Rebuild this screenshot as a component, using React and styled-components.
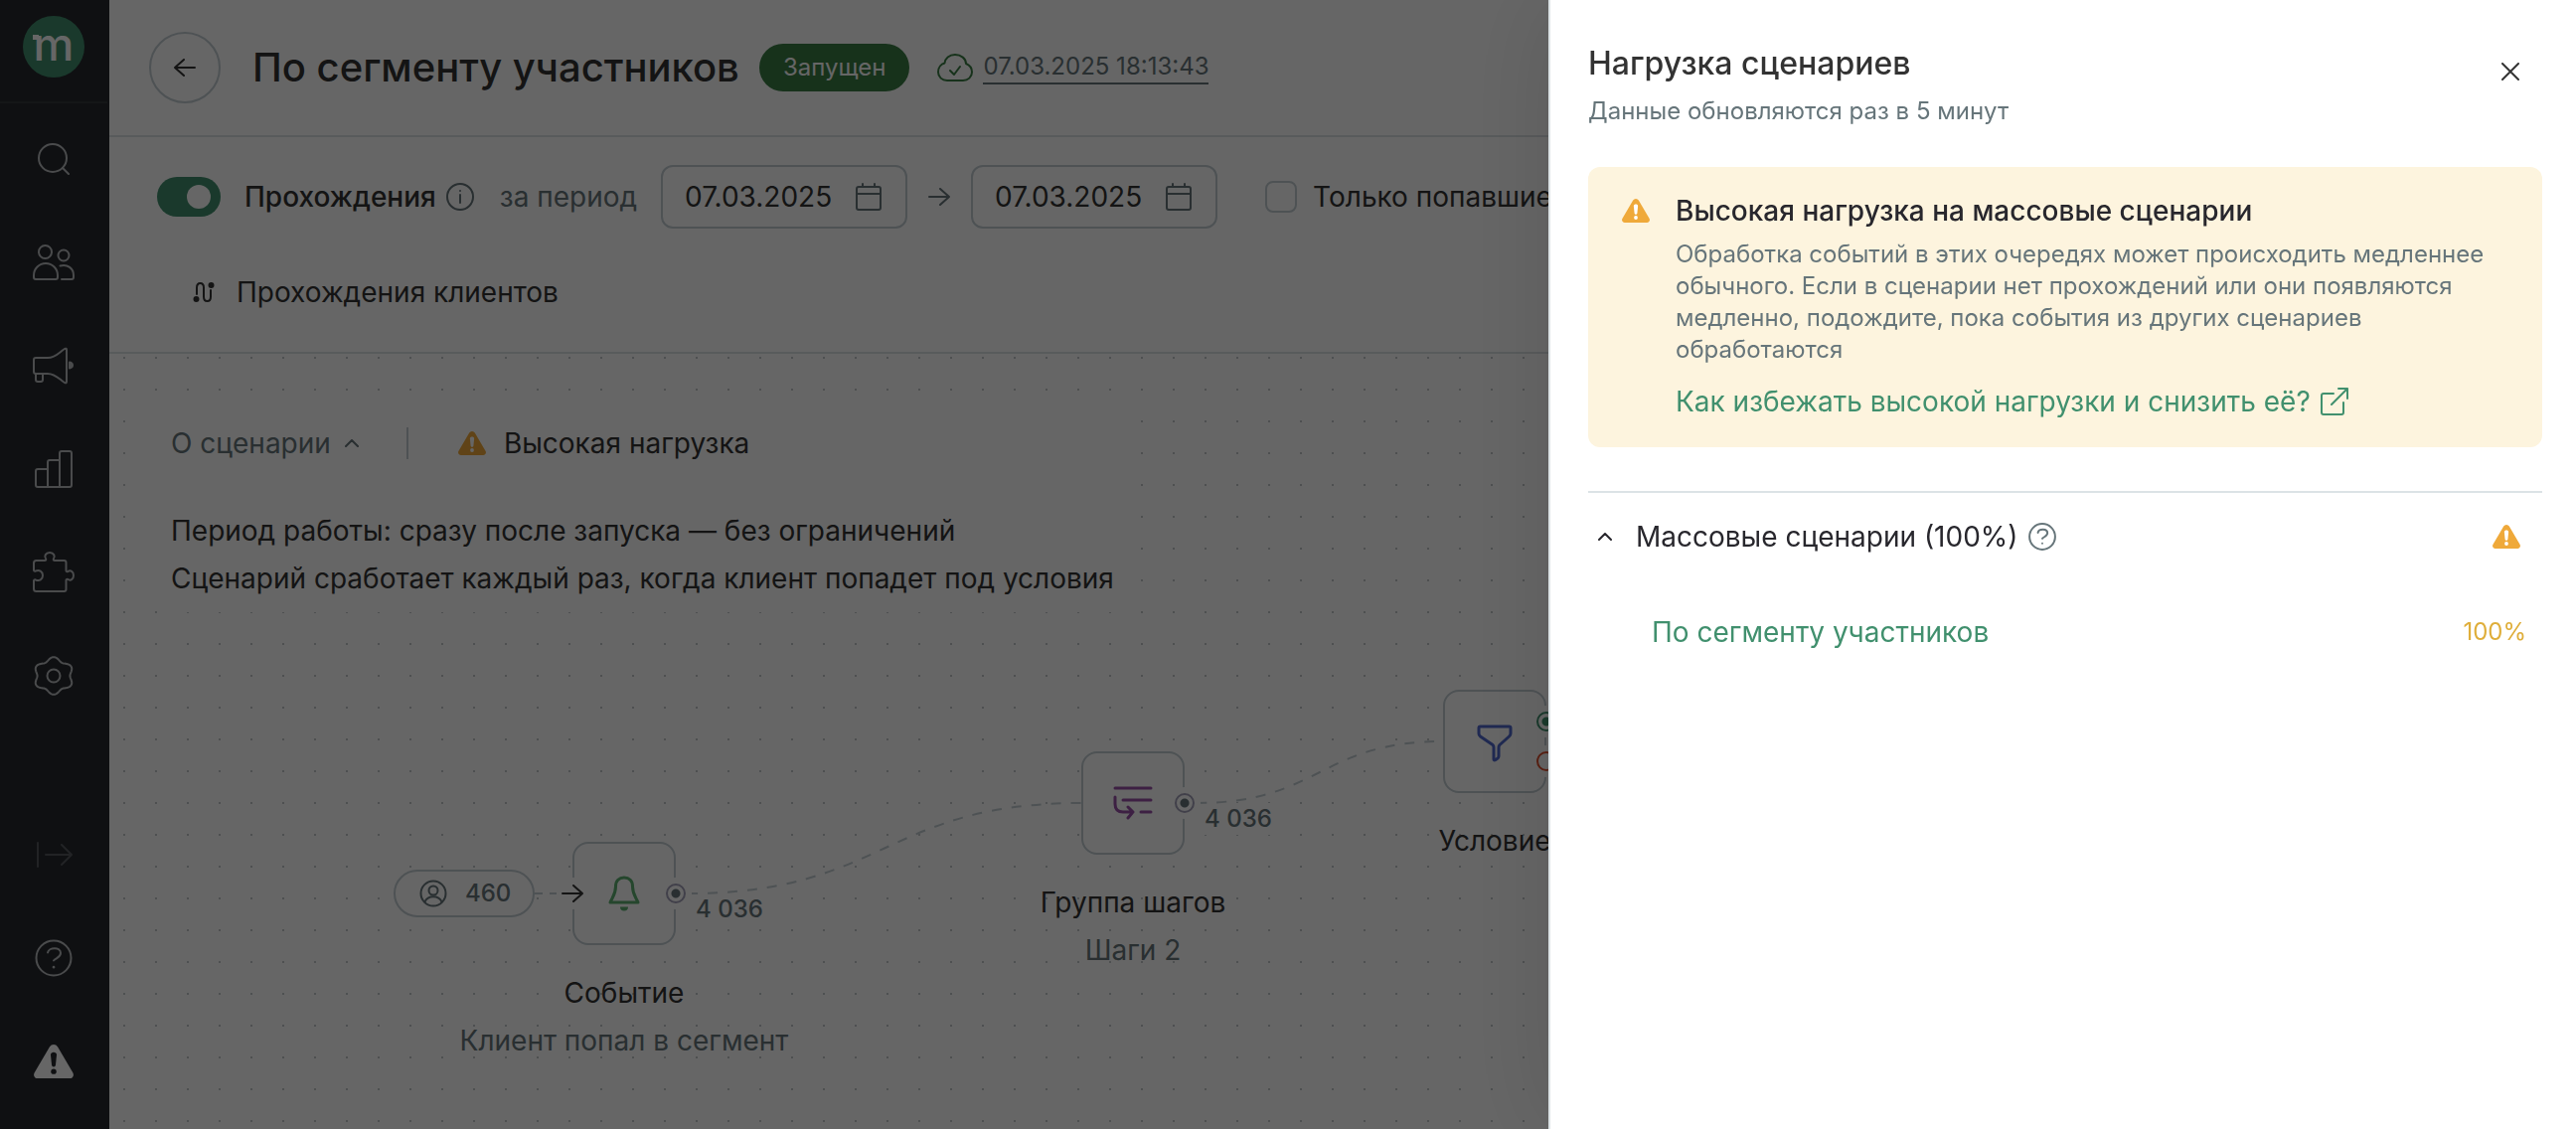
import React from "react";
import styled, { createGlobalStyle } from "styled-components";

const ink = "#333333";
const muted = "#66757a";
const line = "#dce3e6";
const outline = "#c2cdd3";
const accent = "#41906e";
const warn = "#efa93a";

const GlobalStyle = createGlobalStyle`
  *, *::before, *::after { box-sizing: border-box; }
  html, body { margin: 0; overflow: hidden; }
  body {
    background: #ffffff;
    color: ${ink};
    font-family: Inter, "Liberation Sans", sans-serif;
    font-size: 28px;
    line-height: 40px;
  }
  button, input { font: inherit; color: inherit; margin: 0; }
  button { background: none; border: 0; padding: 0; cursor: pointer; }
  h1, h2, h3, p, ul { margin: 0; padding: 0; }
  ul { list-style: none; }
  svg { display: block; flex: none; }
`;

/* ---------- icons ---------- */

const Icon = ({ w, h = w, children, stroke = 2 }) => (
  <svg
    width={w}
    height={h}
    viewBox={`0 0 ${w} ${h}`}
    fill="none"
    stroke="currentColor"
    strokeWidth={stroke}
    strokeLinecap="round"
    strokeLinejoin="round"
    aria-hidden="true"
  >
    {children}
  </svg>
);

const SearchIcon = () => (
  <Icon w={32}>
    <circle cx="15" cy="15" r="14" />
    <path d="M25 25l6 6" />
  </Icon>
);

const PeopleIcon = () => (
  <Icon w={42} h={36}>
    <circle cx="12.5" cy="7.5" r="6.5" />
    <path d="M1 31a12 12 0 0 1 24 0v2q0 2-2 2H3q-2 0-2-2z" />
    <circle cx="31" cy="11" r="5.5" />
    <path d="M27.500 21.500C35 19.500 41 24 41 31v2q0 2-2 2H29" />
  </Icon>
);

const MegaphoneIcon = () => (
  <Icon w={42} h={38}>
    <path d="M1 13q0-2 2-2h12c8 0 12-6 17-9q2-1 2 1v32q0 2-2 1c-5-3-9-9-17-9H3q-2 0-2-2z" />
    <path d="M3 27v6q0 2 2 2h3q2 0 2-2v-6" />
    <path d="M37 15.500c4 1 4 5 0 6z" fill="currentColor" />
  </Icon>
);

const BarsIcon = () => (
  <Icon w={38}>
    <path d="M1 21q0-2 2-2h10v18H3q-2 0-2-2z" />
    <path d="M13 37V12q0-2 2-2h10v27z" />
    <path d="M25 37V3q0-2 2-2h8q2 0 2 2v32q0 2-2 2z" />
  </Icon>
);

const PuzzleIcon = () => (
  <Icon w={42}>
    <path d="M3.500 9H12q1.500 0 1.200-1.500C11 4.500 13 1 17 1s6 3.500 3.800 6.500Q20.500 9 22 9h9.500q2 0 2 2v8q0 1.500 1.500 1.200c3-2.200 6 0 6 3.800s-3 6-6 3.800q-1.500-.3-1.500 1.200v9q0 2-2 2h-28q-2.500 0-2.500-2.500V29.500q0-1.500 1.500-1.200c4 2 7.500-.3 7.500-4.300s-3.500-6.300-7.500-4.300Q1 20 1 18.500v-7Q1 9 3.500 9z" />
  </Icon>
);

const gearOutline = Array.from({ length: 120 }, (_, i) => {
  const a = (i / 120) * Math.PI * 2;
  const r = 17 + 1.8 * Math.cos(6 * (a + Math.PI / 2));
  return `${(20 + 1.08 * r * Math.cos(a)).toFixed(2)},${(20 + r * Math.sin(a)).toFixed(2)}`;
}).join(" ");

const GearIcon = () => (
  <Icon w={40}>
    <polygon points={gearOutline} />
    <circle cx="20" cy="20" r="6.500" />
  </Icon>
);

const CollapseIcon = () => (
  <Icon w={38} h={28}>
    <path d="M3 2v24M11 14h26M27 4l10 10-10 10" />
  </Icon>
);

const HelpIcon = ({ w = 38 }) => (
  <svg width={w} height={w} viewBox="0 0 38 38" fill="none" stroke="currentColor" strokeWidth={76 / w} strokeLinecap="round" aria-hidden="true">
    <circle cx="19" cy="19" r="17.500" />
    <path d="M13 13.500c1-5.500 13-6 13 .5 0 4.500-5 5-7 7.500" />
    <path d="M19 28v.2" strokeWidth="2.600" />
  </svg>
);

const WarningIcon = ({ w = 28, mark = "#fff" }) => (
  <svg width={w} height={(w * 24) / 28} viewBox="0 0 28 24" aria-hidden="true">
    <path
      fill="currentColor"
      d="M11.200 1.600a3.300 3.300 0 0 1 5.600 0l10.700 18.200c1.200 2-.1 4.200-2.300 4.200H2.800C.6 24-.7 21.800.5 19.800z"
    />
    <path fill={mark} d="M11.900 7.400c-.2-2.600 4.400-2.600 4.200 0l-.7 7c-.2 1.800-2.600 1.800-2.800 0z" />
    <circle fill={mark} cx="14" cy="19" r="1.900" />
  </svg>
);

const BackIcon = () => (
  <Icon w={22} h={18}>
    <path d="M21 9H1M10 1L1 9l9 8" />
  </Icon>
);

const ForwardIcon = () => (
  <Icon w={22} h={18}>
    <path d="M1 9h20M12 1l9 8-9 8" />
  </Icon>
);

const CloudIcon = () => (
  <Icon w={36} h={28}>
    <path d="M10 27h16c5 0 9-3.500 9-8.500 0-4-2.500-7-6-8.500C29 5 24 1 18 1S8 5 7.500 9.500C4 10.500 1 14 1 18.500 1 23.500 5 27 10 27z" />
    <path d="M13 17l4 4 6-8" />
  </Icon>
);

const InfoIcon = () => (
  <Icon w={28}>
    <circle cx="14" cy="14" r="13" />
    <path d="M14 12v8M14 8v.1" />
  </Icon>
);

const CalendarIcon = () => (
  <Icon w={26} h={28}>
    <rect x="1" y="4" width="24" height="23" rx="2" />
    <path d="M1 11h24M7 1v3M19 1v3" />
  </Icon>
);

const RouteIcon = () => (
  <Icon w={22}>
    <path d="M4 13V6.500C4 .5 11 .5 11 6.500v9c0 6 7 6 7 0V9" />
    <circle cx="3.500" cy="18" r="2" fill="currentColor" />
    <circle cx="18.500" cy="4" r="2" fill="currentColor" />
  </Icon>
);

const ChevronUp = () => (
  <Icon w={14} h={8}>
    <path d="M1 7l6-6 6 6" />
  </Icon>
);

const CloseIcon = () => (
  <Icon w={18}>
    <path d="M1 1l16 16M17 1L1 17" />
  </Icon>
);

const ExternalIcon = () => (
  <Icon w={28}>
    <path d="M13 6H3q-2 0-2 2v17q0 2 2 2h18q2 0 2-2V15" />
    <path d="M18 1h9v10M27 1L11 17" />
  </Icon>
);

const PersonIcon = () => (
  <Icon w={28}>
    <circle cx="14" cy="14" r="12.500" />
    <circle cx="14" cy="11" r="4.500" />
    <path d="M5.500 22.500c3-7 14-7 17 0" />
  </Icon>
);

const BellIcon = () => (
  <Icon w={34} h={36} stroke={3}>
    <path d="M17 2c-5 0-8.500 3-8.500 9 0 8-3.500 11-5.500 16h28c-2-5-5.500-8-5.500-16 0-6-3.500-9-8.500-9z" />
    <path d="M13 31.500h8a4 4 0 0 1-8 0z" fill="currentColor" stroke="none" />
  </Icon>
);

const GroupIcon = () => (
  <Icon w={40} h={34} stroke={3}>
    <path d="M2 2h36M10 14h28M28 26h10M2 11v7c0 6 3 8 8 8h10M15 21l5 5-5 6" />
  </Icon>
);

const FunnelIcon = () => (
  <Icon w={36} h={42} stroke={3}>
    <path d="M3.500 6h29q1.500 0 1.500 1.500V13q0 2-1.500 3L23 24.500q-1 1-1 2.500v9q0 1-1 2l-2.500 1.700q-1.500.8-1.500-1V27q0-1.500-1-2.500L3.500 16Q2 15 2 13V7.500Q2 6 3.500 6z" />
  </Icon>
);

/* ---------- shell ---------- */

const Shell = styled.div`
  display: flex;
  min-height: 100vh;
`;

const Sidebar = styled.nav`
  flex: none;
  display: flex;
  flex-direction: column;
  width: 110px;
  padding-bottom: 16px;
  border-right: 2px solid #26292e;
  background: #26292e;
  color: #b8bbbe;
`;

const LogoLink = styled.a`
  display: flex;
  justify-content: center;
  height: 104px;
  padding-top: 16px;
  border-bottom: 2px solid #34373b;
  text-decoration: none;
`;

const Logo = styled.span`
  position: relative;
  width: 62px;
  height: 62px;
  border-radius: 50%;
  background: ${accent};
  color: #ffffff;
  font-size: 46px;
  font-weight: 500;
  line-height: 56px;
  text-align: center;

  &::before {
    content: "";
    position: absolute;
    left: 10px;
    top: 19px;
    width: 6px;
    height: 5px;
    background: #ffffff;
  }
`;

const NavList = styled.ul`
  display: flex;
  flex-direction: column;
  padding-top: ${(p) => (p.$top ? "4px" : "0")};
  margin-top: ${(p) => (p.$top ? "0" : "auto")};
`;

const NavButton = styled.button`
  display: flex;
  align-items: center;
  justify-content: center;
  width: 100%;
  height: 104px;
  color: ${(p) => p.$color || "inherit"};
`;

const Main = styled.main`
  flex: 1;
  min-width: 0;
  display: flex;
  flex-direction: column;
`;

/* ---------- header ---------- */

const Header = styled.header`
  display: flex;
  align-items: center;
  gap: 20px;
  height: 138px;
  padding: 0 40px;
  border-bottom: 2px solid ${line};
`;

const BackButton = styled.button`
  display: flex;
  align-items: center;
  justify-content: center;
  width: 72px;
  height: 72px;
  margin-right: 12px;
  border: 2px solid ${outline};
  border-radius: 50%;
`;

const Title = styled.h1`
  font-size: 40px;
  font-weight: 500;
  line-height: 48px;
  white-space: nowrap;
`;

const Status = styled.span`
  padding: 0 24px;
  border-radius: 24px;
  background: #3a7d44;
  color: #ffffff;
  font-size: 24px;
  line-height: 48px;
`;

const Saved = styled.div`
  display: flex;
  align-items: center;
  gap: 10px;
  margin-left: 8px;
  color: #3a7d44;
`;

const SavedLink = styled.a`
  border-bottom: 2px solid ${muted};
  color: ${muted};
  font-size: 24px;
  line-height: 32px;
  text-decoration: none;
  white-space: nowrap;
`;

/* ---------- toolbar ---------- */

const Toolbar = styled.section`
  display: flex;
  flex-direction: column;
  gap: 32px;
  padding: 28px 48px;
  border-bottom: 2px solid ${line};
`;

const ToolRow = styled.div`
  display: flex;
  align-items: center;
  height: 64px;
  white-space: nowrap;
`;

const Toggle = styled.input`
  appearance: none;
  position: relative;
  width: 64px;
  height: 40px;
  border-radius: 20px;
  background: ${accent};

  &::after {
    content: "";
    position: absolute;
    right: 10px;
    top: 8px;
    width: 24px;
    height: 24px;
    border-radius: 50%;
    background: #ffffff;
  }
`;

const ToggleLabel = styled.label`
  padding: 0 10px 0 24px;
  font-weight: 500;
`;

const InfoButton = styled.button`
  color: ${muted};
`;

const Caption = styled.span`
  padding: 0 24px 0 26px;
  color: ${muted};
`;

const DateField = styled.label`
  display: flex;
  align-items: center;
  justify-content: space-between;
  width: 248px;
  height: 64px;
  padding: 0 24px 0 22px;
  border: 2px solid ${outline};
  border-radius: 12px;
  color: ${muted};
`;

const DateInput = styled.input`
  width: 160px;
  padding: 0;
  border: 0;
  outline: 0;
  background: none;
  color: ${ink};
`;

const RangeArrow = styled.span`
  padding: 0 21px;
  color: ${muted};
`;

const CheckLabel = styled.label`
  display: flex;
  align-items: center;
  gap: 16px;
  padding-left: 48px;
`;

const Checkbox = styled.input`
  appearance: none;
  width: 32px;
  height: 32px;
  border: 2px solid ${outline};
  border-radius: 8px;
`;

const TabButton = styled.button`
  display: flex;
  align-items: center;
  gap: 22px;
  padding: 0 36px;
`;

/* ---------- canvas ---------- */

const Canvas = styled.section`
  position: relative;
  flex: 1;
  padding: 44px 46px;
  overflow: hidden;
  background-image: radial-gradient(circle at 15px 4px, #c2c7ca 1px, transparent 1px);
  background-size: 32px 32px;
`;

const About = styled.div`
  display: flex;
  flex-direction: column;
  gap: 48px;
  width: fit-content;
  padding: 30px 16px 10px;
  border-radius: 16px;
  background: #ffffff;
`;

const AboutHead = styled.div`
  display: flex;
  align-items: center;
  height: 32px;
`;

const AboutToggle = styled.button`
  display: flex;
  align-items: center;
  gap: 14px;
  color: ${muted};
`;

const Divider = styled.span`
  width: 2px;
  height: 32px;
  margin: 0 50px 0 48px;
  background: ${outline};
`;

const LoadFlag = styled.span`
  display: flex;
  align-items: center;
  gap: 18px;

  svg { color: ${warn}; }
`;

const AboutText = styled.div`
  line-height: 48px;
`;

const Edges = styled.svg`
  position: absolute;
  left: 0;
  top: 0;
`;

const EdgeCount = styled.span`
  position: absolute;
  left: ${(p) => p.$x}px;
  top: ${(p) => p.$y}px;
  background: #ffffff;
  color: ${muted};
  font-size: 24px;
  font-weight: 500;
  line-height: 32px;
`;

const Entry = styled.div`
  position: absolute;
  left: ${(p) => p.$x}px;
  top: ${(p) => p.$y}px;
  display: flex;
  align-items: center;
  gap: 18px;
  width: 142px;
  height: 48px;
  padding-left: 24px;
  border: 2px solid ${outline};
  border-radius: 24px;
  background: #ffffff;
  color: ${muted};
  font-size: 24px;
  font-weight: 500;
`;

const NodeRoot = styled.div`
  position: absolute;
  left: ${(p) => p.$x}px;
  top: ${(p) => p.$y}px;
  display: flex;
  flex-direction: column;
  align-items: center;
  width: 104px;
  line-height: 48px;
  white-space: nowrap;
`;

const NodeBox = styled.div`
  position: relative;
  flex: none;
  display: flex;
  align-items: center;
  justify-content: center;
  width: 104px;
  height: 104px;
  margin-bottom: 24px;
  border: 2px solid ${outline};
  border-radius: 16px;
  background: #ffffff;
  color: ${(p) => p.$color};
`;

const NodeNote = styled.span`
  color: ${muted};
`;

const Port = styled.span`
  position: absolute;
  right: -18px;
  top: ${(p) => p.$y}px;
  display: flex;
  align-items: center;
  justify-content: center;
  width: 32px;
  height: 32px;
  border-radius: 50%;
  background: #ffffff;

  &::before {
    content: "";
    width: 20px;
    height: 20px;
    border: 2px solid ${(p) => p.$ring};
    border-radius: 50%;
    background: ${(p) => (p.$dot ? `radial-gradient(circle, ${p.$dot} 4px, transparent 5px)` : "none")};
  }
`;

const Inlet = styled.span`
  position: absolute;
  left: -18px;
  top: 34px;
  display: flex;
  align-items: center;
  justify-content: center;
  width: 32px;
  height: 32px;
  border-radius: 50%;
  background: #ffffff;
  color: ${ink};
`;

/* ---------- drawer ---------- */

const Backdrop = styled.div`
  position: fixed;
  inset: 0;
  background: rgba(0, 0, 0, 0.6);
`;

const Drawer = styled.aside`
  position: fixed;
  top: 0;
  right: 0;
  bottom: 0;
  width: 1034px;
  padding: 44px 34px 0 38px;
  border-left: 2px solid ${line};
  background: #ffffff;
  box-shadow: 0 0 96px rgba(0, 0, 0, 0.12);
`;

const DrawerHead = styled.div`
  display: flex;
  align-items: flex-start;
  justify-content: space-between;
  margin-bottom: 40px;
`;

const DrawerTitle = styled.h2`
  margin-bottom: 12px;
  font-size: 32px;
  font-weight: 500;
  line-height: 40px;
`;

const Small = styled.p`
  color: ${muted};
  font-size: 24px;
  line-height: 32px;
`;

const CloseButton = styled.button`
  display: flex;
  align-items: center;
  justify-content: center;
  width: 64px;
  height: 56px;
`;

const Alert = styled.section`
  display: flex;
  gap: 26px;
  margin-bottom: 44px;
  padding: 24px 48px 26px 34px;
  border-radius: 12px;
  background: #fdf4de;

  > svg { margin-top: 8px; color: ${warn}; }
`;

const AlertBody = styled.div`
  display: flex;
  flex-direction: column;
  color: #28272d;
`;

const AlertTitle = styled.h3`
  margin-bottom: 8px;
  font-size: 28px;
  font-weight: 500;
`;

const GreenLink = styled.a`
  display: flex;
  align-items: center;
  gap: 10px;
  color: ${accent};
  text-decoration: none;
`;

const AlertLink = styled(GreenLink)`
  margin-top: 16px;
`;

const Group = styled.section`
  border-top: 2px solid ${line};
  color: #28272d;
`;

const GroupHead = styled.div`
  display: flex;
  align-items: center;
  height: 88px;
  padding: 0 22px 0 10px;
`;

const GroupToggle = styled.button`
  display: flex;
  align-items: center;
  gap: 24px;
  padding-right: 10px;
`;

const HelpButton = styled.button`
  margin-right: auto;
  color: ${muted};
`;

const WarnMark = styled.span`
  color: ${warn};
`;

const GroupItem = styled.li`
  display: flex;
  align-items: center;
  justify-content: space-between;
  height: 104px;
  padding: 0 16px 0 64px;
`;

const Percent = styled.span`
  color: #dfae3a;
  font-size: 24px;
`;

/* ---------- app ---------- */

const topNav = [
  ["Поиск", SearchIcon],
  ["Клиенты", PeopleIcon],
  ["Кампании", MegaphoneIcon],
  ["Отчёты", BarsIcon],
  ["Интеграции", PuzzleIcon],
  ["Настройки", GearIcon],
];

function DatePicker({ id, label }) {
  return (
    <DateField htmlFor={id}>
      <DateInput id={id} type="text" aria-label={label} defaultValue="07.03.2025" />
      <CalendarIcon />
    </DateField>
  );
}

function FlowNode({ x, y, color, icon, title, note, inlet, ports }) {
  return (
    <NodeRoot $x={x} $y={y}>
      <NodeBox $color={color}>
        {icon}
        {inlet && (
          <Inlet>
            <ForwardIcon />
          </Inlet>
        )}
        {ports.map((p) => (
          <Port key={p.y} $y={p.y} $ring={p.ring} $dot={p.dot} />
        ))}
      </NodeBox>
      <span>{title}</span>
      {note && <NodeNote>{note}</NodeNote>}
    </NodeRoot>
  );
}

const mainPort = [{ y: 34, ring: "#a3a0b8", dot: muted }];
const branchPorts = [
  { y: 14, ring: accent, dot: accent },
  { y: 54, ring: "#e0502f" },
];

export default function App() {
  return (
    <>
      <GlobalStyle />
      <Shell>
        <Sidebar>
          <LogoLink href="#home">
            <Logo>m</Logo>
          </LogoLink>
          <NavList $top>
            {topNav.map(([name, Glyph]) => (
              <li key={name}>
                <NavButton aria-label={name}>
                  <Glyph />
                </NavButton>
              </li>
            ))}
          </NavList>
          <NavList>
            <li>
              <NavButton aria-label="Развернуть" $color="#55595e">
                <CollapseIcon />
              </NavButton>
            </li>
            <li>
              <NavButton aria-label="Помощь">
                <HelpIcon />
              </NavButton>
            </li>
            <li>
              <NavButton aria-label="Предупреждения" $color="#ffffff">
                <WarningIcon w={40} mark="#26292e" />
              </NavButton>
            </li>
          </NavList>
        </Sidebar>

        <Main>
          <Header>
            <BackButton aria-label="Назад">
              <BackIcon />
            </BackButton>
            <Title>По сегменту участников</Title>
            <Status>Запущен</Status>
            <Saved>
              <CloudIcon />
              <SavedLink href="#history">07.03.2025 18:13:43</SavedLink>
            </Saved>
          </Header>

          <Toolbar>
            <ToolRow>
              <Toggle id="passes" type="checkbox" defaultChecked />
              <ToggleLabel htmlFor="passes">Прохождения</ToggleLabel>
              <InfoButton aria-label="Подробнее">
                <InfoIcon />
              </InfoButton>
              <Caption>за период</Caption>
              <DatePicker id="from" label="Начало периода" />
              <RangeArrow>
                <ForwardIcon />
              </RangeArrow>
              <DatePicker id="to" label="Конец периода" />
              <CheckLabel>
                <Checkbox type="checkbox" />
                Только попавшие
              </CheckLabel>
            </ToolRow>
            <ToolRow>
              <TabButton>
                <RouteIcon />
                Прохождения клиентов
              </TabButton>
            </ToolRow>
          </Toolbar>

          <Canvas>
            <About>
              <AboutHead>
                <AboutToggle>
                  О сценарии
                  <ChevronUp />
                </AboutToggle>
                <Divider />
                <LoadFlag>
                  <WarningIcon />
                  Высокая нагрузка
                </LoadFlag>
              </AboutHead>
              <AboutText>
                <p>Период работы: сразу после запуска — без ограничений</p>
                <p>Сценарий сработает каждый раз, когда клиент попадет под условия</p>
              </AboutText>
            </About>

            <EdgeCount $x={590} $y={543}>4 036</EdgeCount>
            <EdgeCount $x={1102} $y={452}>4 036</EdgeCount>
            <Edges width="1460" height="780" fill="none" stroke={outline} strokeWidth="2" aria-hidden="true">
              <path d="M428 543H466" strokeDasharray="8 7" />
              <path d="M582 543C780 543 780 452 978 452" strokeDasharray="10 10" />
              <path d="M1094 452C1218 452 1218 390 1342 390" strokeDasharray="10 10" />
            </Edges>
            <Entry $x={286} $y={519}>
              <PersonIcon />
              460
            </Entry>
            <FlowNode
              x={466}
              y={491}
              color="#5cb070"
              icon={<BellIcon />}
              title="Событие"
              note="Клиент попал в сегмент"
              inlet
              ports={mainPort}
            />
            <FlowNode
              x={978}
              y={400}
              color="#9850a8"
              icon={<GroupIcon />}
              title="Группа шагов"
              note="Шаги 2"
              ports={mainPort}
            />
            <FlowNode
              x={1342}
              y={338}
              color="#5068cc"
              icon={<FunnelIcon />}
              title="Условие"
              ports={branchPorts}
            />
          </Canvas>
        </Main>
      </Shell>

      <Backdrop />

      <Drawer aria-label="Нагрузка сценариев">
        <DrawerHead>
          <div>
            <DrawerTitle>Нагрузка сценариев</DrawerTitle>
            <Small>Данные обновляются раз в 5 минут</Small>
          </div>
          <CloseButton aria-label="Закрыть">
            <CloseIcon />
          </CloseButton>
        </DrawerHead>

        <Alert>
          <WarningIcon />
          <AlertBody>
            <AlertTitle>Высокая нагрузка на массовые сценарии</AlertTitle>
            <Small>
              Обработка событий в этих очередях может происходить медленнее обычного. Если в
              сценарии нет прохождений или они появляются медленно, подождите, пока события из
              других сценариев обработаются
            </Small>
            <AlertLink href="#help">
              Как избежать высокой нагрузки и снизить её?
              <ExternalIcon />
            </AlertLink>
          </AlertBody>
        </Alert>

        <Group>
          <GroupHead>
            <GroupToggle>
              <ChevronUp />
              Массовые сценарии (100%)
            </GroupToggle>
            <HelpButton aria-label="Что это">
              <HelpIcon w={28} />
            </HelpButton>
            <WarnMark>
              <WarningIcon />
            </WarnMark>
          </GroupHead>
          <ul>
            <GroupItem>
              <GreenLink href="#scenario">По сегменту участников</GreenLink>
              <Percent>100%</Percent>
            </GroupItem>
          </ul>
        </Group>
      </Drawer>
    </>
  );
}
